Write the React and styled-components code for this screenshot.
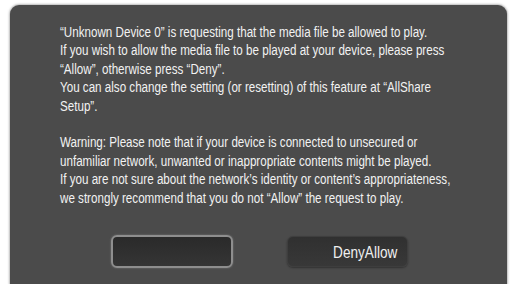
import React from "react";
import styled, { createGlobalStyle } from "styled-components";

const Global = createGlobalStyle`
  html, body {
    margin: 0;
    padding: 0;
    background: #ffffff;
    overflow: hidden;
  }
  body {
    font-family: "Liberation Sans", Arial, sans-serif;
  }
`;

const Panel = styled.div`
  margin: 5px 5px 0 10px;
  height: 279px;
  background: #4b4b4b;
  border-radius: 9px 9px 0 0;
  box-shadow: 0 0 2px 1px rgba(120, 120, 120, 0.5);
  padding: 18px 0 0 50px;
  box-sizing: border-box;
`;

const Message = styled.div`
  color: #f2f2f2;
  font-size: 14px;
  line-height: 18.4px;
  white-space: nowrap;
  transform: scaleX(0.83);
  transform-origin: left top;
`;

const Line = styled.div`
  height: 18.4px;
`;

const Buttons = styled.div`
  display: flex;
  align-items: center;
  gap: 54px;
  margin: 28px 0 0 51px;
`;

const Button = styled.div`
  box-sizing: border-box;
  height: ${(p) => (p.$focused ? "33px" : "31px")};
  width: ${(p) => (p.$focused ? "122px" : "121px")};
  border-radius: 6px;
  background: ${(p) =>
    p.$focused
      ? "linear-gradient(#2a2a2a, #353535)"
      : "linear-gradient(#303030, #383838)"};
  border: ${(p) => (p.$focused ? "2px solid #8e8e8e" : "1px solid #3e3e3e")};
  box-shadow: ${(p) =>
    p.$focused ? "0 0 2px rgba(200,200,200,0.4)" : "0 1px 2px rgba(0,0,0,0.35)"};
  display: flex;
  align-items: center;
  justify-content: flex-end;
  padding: 3px 10px 0 0;
  color: #f0f0f0;
  font-size: 17px;
`;

const Label = styled.span`
  display: inline-block;
  transform: scaleX(0.8);
  transform-origin: right center;
`;

const lines = [
  "\u201CUnknown Device 0\u201D is requesting that the media file be allowed to play.",
  "If you wish to allow the media file to be played at your device, please press",
  "\u201CAllow\u201D, otherwise press \u201CDeny\u201D.",
  "You can also change the setting (or resetting) of this feature at \u201CAllShare",
  "Setup\u201D.",
  "",
  "Warning: Please note that if your device is connected to unsecured or",
  "unfamiliar network, unwanted or inappropriate contents might be played.",
  "If you are not sure about the network\u2019s identity or content\u2019s appropriateness,",
  "we strongly recommend that you do not \u201CAllow\u201D the request to play.",
];

export default function App() {
  return (
    <>
      <Global />
      <Panel>
        <Message>
          {lines.map((l, i) => (
            <Line key={i}>{l}</Line>
          ))}
        </Message>
        <Buttons>
          <Button $focused />
          <Button>
            <Label>DenyAllow</Label>
          </Button>
        </Buttons>
      </Panel>
    </>
  );
}
